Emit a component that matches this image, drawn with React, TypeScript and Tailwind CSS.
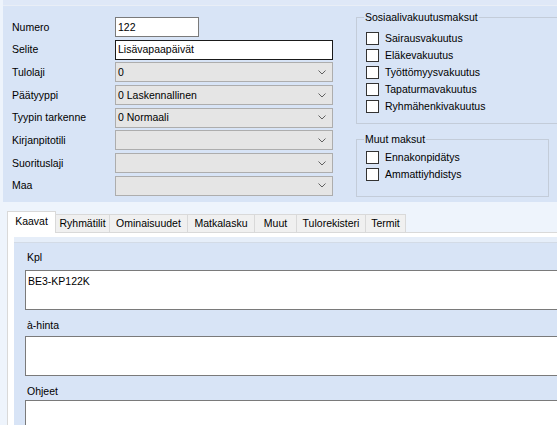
import React from "react";

type Row = { label: string; kind: "text" | "select"; value?: string; w?: string; focused?: boolean };

const rows: Row[] = [
  { label: "Numero", kind: "text", value: "122", w: "w-[84px]" },
  { label: "Selite", kind: "text", value: "Lisävapaapäivät", w: "w-[218px]", focused: true },
  { label: "Tulolaji", kind: "select", value: "0" },
  { label: "Päätyyppi", kind: "select", value: "0 Laskennallinen" },
  { label: "Tyypin tarkenne", kind: "select", value: "0 Normaali" },
  { label: "Kirjanpitotili", kind: "select" },
  { label: "Suorituslaji", kind: "select" },
  { label: "Maa", kind: "select" },
];

const social = ["Sairausvakuutus", "Eläkevakuutus", "Työttömyysvakuutus", "Tapaturmavakuutus", "Ryhmähenkivakuutus"];
const other = ["Ennakonpidätys", "Ammattiyhdistys"];

const tabs = [
  { name: "Kaavat", w: "w-[49px]" },
  { name: "Ryhmätilit", w: "w-[54px]" },
  { name: "Ominaisuudet", w: "w-[78px]" },
  { name: "Matkalasku", w: "w-[67px]" },
  { name: "Muut", w: "w-[42px]" },
  { name: "Tulorekisteri", w: "w-[69px]" },
  { name: "Termit", w: "w-[40px]" },
];

function Chevron() {
  return (
    <svg width="8" height="5" viewBox="0 0 8 5" className="shrink-0">
      <path d="M0.5 0.5 L4 4 L7.5 0.5" fill="none" stroke="#606060" strokeWidth="1" />
    </svg>
  );
}

function Check({ label }: { label: string }) {
  return (
    <div className="flex items-center h-[17px]">
      <span className="w-[13px] h-[13px] border border-[#333333] bg-white shrink-0" />
      <span className="ml-[6px]">{label}</span>
    </div>
  );
}

export default function App() {
  return (
    <div className="w-[557px] h-[425px] overflow-hidden bg-[#eef4fc] text-[10.5px] leading-[13px] text-black font-['Liberation_Sans',Arial,sans-serif]">
      {/* top panel */}
      <div className="ml-[3px] h-[202px] bg-[#d8e4f6]">
        <div className="h-[6px] bg-[#dfe8f7] border-b border-[#e9eef6]" />
        <div className="flex">
          {/* form fields */}
          <div className="flex flex-col gap-[2.7px] pt-[11px]">
            {rows.map((r) => (
              <div key={r.label} className="flex items-center h-[20px]">
                <div className="w-[112px] pl-[9px]">{r.label}</div>
                {r.kind === "text" ? (
                  <div
                    className={`${r.w} h-[20px] bg-white flex items-center px-[2px] border ${
                      r.focused ? "border-[#1a1a1a]" : "border-[#7a7a7a]"
                    }`}
                  >
                    {r.value}
                  </div>
                ) : (
                  <div className="w-[218px] h-[20px] bg-[#e5e5e5] border border-[#adadad] flex items-center justify-between pl-[2px] pr-[6px]">
                    <span>{r.value ?? ""}</span>
                    <Chevron />
                  </div>
                )}
              </div>
            ))}
          </div>

          {/* checkbox groups */}
          <div className="ml-[23px] pt-[5px] flex flex-col">
            <fieldset className="w-[220px] border border-[#c3ccd9] pl-[9px] pt-[6px] pb-[8px]">
              <legend className="-ml-[2px] px-[1px] leading-[13px]">Sosiaalivakuutusmaksut</legend>
              {social.map((s) => (
                <Check key={s} label={s} />
              ))}
            </fieldset>
            <fieldset className="mt-[9px] w-[193px] border border-[#c3ccd9] pl-[9px] pt-[3px] pb-[13px]">
              <legend className="-ml-[2px] px-[1px] leading-[13px]">Muut maksut</legend>
              {other.map((s) => (
                <Check key={s} label={s} />
              ))}
            </fieldset>
          </div>
        </div>
      </div>

      {/* tabs */}
      <div className="mt-[9px] ml-[7px] flex items-start h-[21px]">
        {tabs.map((t, i) =>
          i === 0 ? (
            <div
              key={t.name}
              className={`${t.w} h-[22px] relative z-10 bg-white border border-b-0 border-[#d9d9d9] flex items-center justify-center pb-[2px]`}
            >
              {t.name}
            </div>
          ) : (
            <div
              key={t.name}
              className={`${t.w} mt-[3px] h-[18px] bg-[#f0f0f0] border border-l-0 border-b-0 border-[#d9d9d9] flex items-center justify-center`}
            >
              {t.name}
            </div>
          )
        )}
      </div>

      {/* tab page */}
      <div className="ml-[7px] h-[300px] bg-white border-l border-t border-[#d9d9d9] pt-[4px] pl-[6px]">
        <div className="h-[300px] bg-[#d8e4f6]">
          <div className="h-[6px] bg-[#e6eef9] border-b border-[#d3dbe6]" />
          <div className="pl-[11px] pt-[8px]">
            <div className="ml-[2px]">Kpl</div>
            <div className="mt-[6px] w-[600px] h-[40px] bg-white border border-[#7a7a7a] px-[2px] pt-[4px]">BE3-KP122K</div>
            <div className="ml-[2px] mt-[9px]">à-hinta</div>
            <div className="mt-[4px] w-[600px] h-[40px] bg-white border border-[#7a7a7a]" />
            <div className="ml-[2px] mt-[9px]">Ohjeet</div>
            <div className="mt-[2px] w-[600px] h-[40px] bg-white border border-[#7a7a7a]" />
          </div>
        </div>
      </div>
    </div>
  );
}
